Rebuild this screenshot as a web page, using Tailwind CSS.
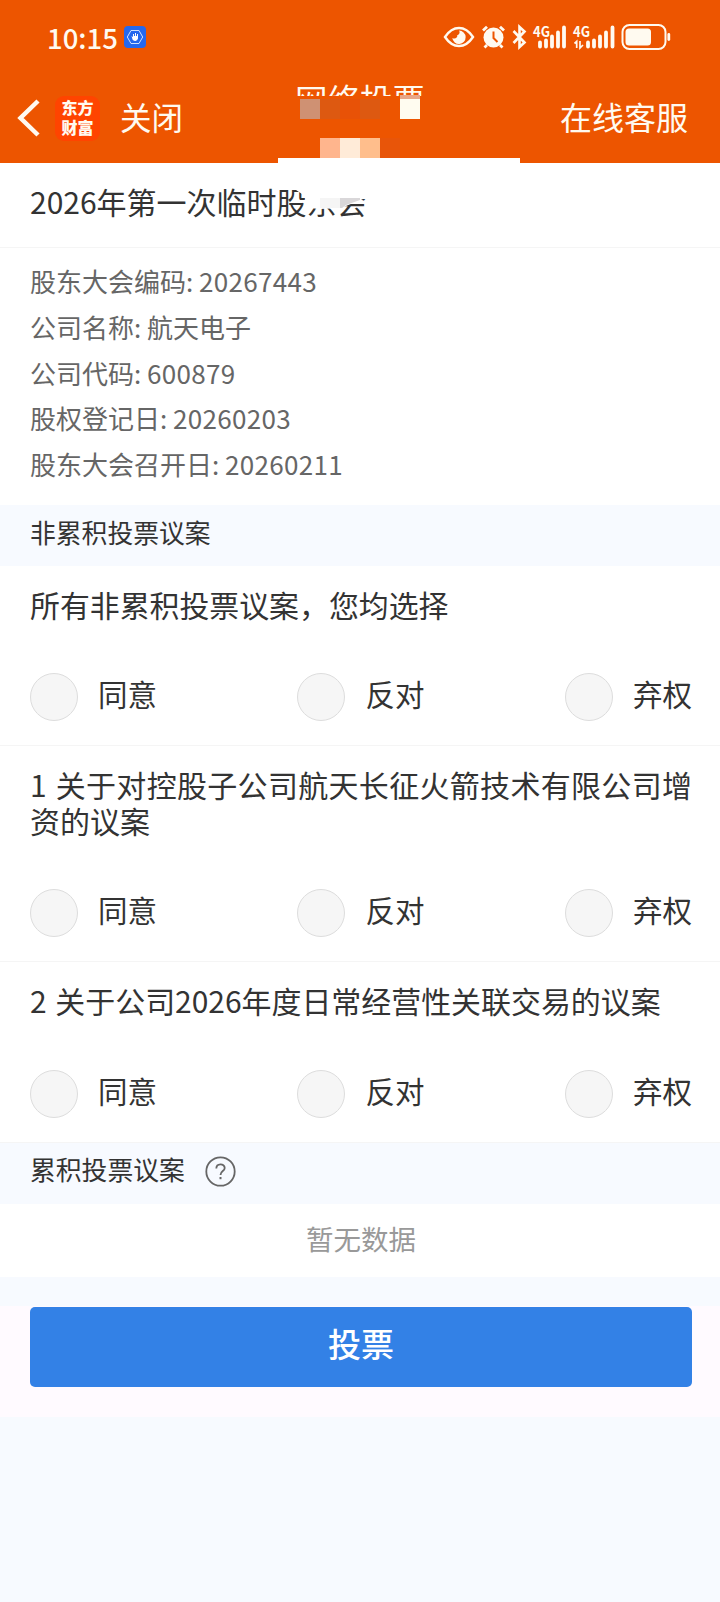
<!DOCTYPE html>
<html lang="zh-CN">
<head>
  <meta charset="UTF-8">
  <meta name="viewport" content="width=device-width, initial-scale=1.0">
  <title>网络投票</title>
  <script src="https://cdn.jsdelivr.net/npm/@tailwindcss/browser@4"></script>
</head>
<body class="bg-[#f7faff] font-['Noto_Sans_CJK_SC',sans-serif] text-[#333]">
<div class="w-[720px] h-[1602px] overflow-hidden">

  <!-- Header -->
  <header class="relative h-[163px] bg-[#ed5500] text-[#fffaf0]">
    <!-- Status bar -->
    <div class="h-[74px] pl-[47px] pr-[48px] flex items-center justify-between">
      <div class="flex items-center">
        <span class="w-[77px] pb-px text-[27.500px] leading-[36px] font-medium">10:15</span>
        <svg class="w-[22px] h-[22px]" viewBox="0 0 22 22">
          <rect width="22" height="22" rx="4" fill="#2468ee"/>
          <path d="M7 4.500h8l3.700 6.500-3.700 6.500H7L3.300 11z" fill="none" stroke="#cfe2ff" stroke-width="1"/>
          <path d="M7.500 10l1.500 1V8h1v2h1V7h1v3h1V8h1v4.500a3 3 0 0 1-5.500 1z" fill="#fff"/>
        </svg>
      </div>
      <svg class="w-[230px] h-[30px]" viewBox="442 22 230 30" fill="none" stroke="#fffaf0">
        <!-- eye -->
        <path d="M445 37c4-6 8-9 14-9s10 3 14 9c-4 6-8 9-14 9s-10-3-14-9z" stroke-width="2.400"/>
        <path d="M459 30.500a6.700 6.700 0 1 1-6.700 7.500c2.500 1.500 5.500 0 5-3 2 0 3-2.500 1.700-4.500z" fill="#fffaf0" stroke="none"/>
        <!-- alarm -->
        <circle cx="493.500" cy="37.500" r="10" fill="#fffaf0" stroke="none"/>
        <path d="M483 30.500l4-3.800M504 30.500l-4-3.800M487 45l-2.500 2.500M500 45l2.500 2.500" stroke-width="2.800"/>
        <path d="M493.500 31.500v6.500l4 4" stroke="#ed5500" stroke-width="2"/>
        <!-- bluetooth -->
        <path d="M513.500 31l11 11.500-5 4.500V27l5 4.500-11 11.500" stroke-width="2.600"/>
        <!-- signal 1 -->
        <path d="M540 46.500v-4M546 46.500v-6M552 46.500v-10M558 46.500v-14M564 46.500v-19" stroke-width="3.800" stroke-linecap="round"/>
        <!-- signal 2 -->
        <path d="M588 46.500v-4M594 46.500v-6M600 46.500v-10M606 46.500v-14M612.500 46.500v-19" stroke-width="3.800" stroke-linecap="round"/>
        <path d="M574.500 43.500l2.200-2v6.500M580 41v7l3-3" stroke-width="1.700"/>
        <g fill="#fffaf0" stroke="none" font-size="14" font-weight="700" font-family="Noto Sans CJK SC">
          <text x="533" y="37" textLength="17" lengthAdjust="spacingAndGlyphs">4G</text>
          <text x="573" y="37" textLength="17" lengthAdjust="spacingAndGlyphs">4G</text>
        </g>
        <!-- battery -->
        <rect x="622.500" y="25" width="43" height="24" rx="7" stroke-width="2"/>
        <rect x="625.500" y="28.500" width="25.500" height="17" rx="3.500" fill="#fffaf0" stroke="none"/>
        <path d="M668.800 34.500v5" stroke-width="2.800" stroke-linecap="round"/>
      </svg>
    </div>

    <!-- Navigation bar -->
    <div class="h-[88px] pl-[17px] pr-[32px] flex items-center justify-between">
      <div class="flex items-center">
        <svg class="w-[23px] h-[38px]" viewBox="0 0 23 38" fill="none" stroke="#fffaf0" stroke-width="4.500">
          <path d="M21 2L3.500 19 21 36"/>
        </svg>
        <div class="ml-[15px] w-[45px] h-[45px] rounded-[9px] bg-[#ff4400] text-[16px] font-black text-center flex flex-col">
          <span class="mt-px h-[20px] leading-[20px]">东方</span>
          <span class="h-[20px] leading-[20px]">财富</span>
        </div>
        <span class="ml-[20px] pb-[4px] text-[31.500px] leading-[40px]">关闭</span>
      </div>
      <span class="pb-[4px] text-[32px] leading-[40px]">在线客服</span>
    </div>

    <!-- Page title, mostly covered by the mosaic -->
    <div class="absolute left-[295px] top-[82px] w-[132px] h-[14px] overflow-hidden text-[32.500px] leading-[34px] whitespace-nowrap">网络投票</div>
    <div class="absolute left-[300px] top-[99px] flex">
      <i class="size-5 bg-[#cf9173]"></i>
      <i class="size-5 bg-[#dd5911]"></i>
      <i class="size-5 bg-[#e85207]"></i>
      <i class="size-5 bg-[#dd5911]"></i>
      <i class="size-5"></i>
      <i class="w-5 h-[24px] -mt-[4px] border-t-4 border-[#e8a688] bg-[#fffcf0]"></i>
    </div>
    <div class="absolute left-[320px] top-[138px] flex">
      <i class="size-5 bg-[#ffb58d]"></i>
      <i class="size-5 bg-[#ffebd8]"></i>
      <i class="size-5 bg-[#ffbe8c]"></i>
      <i class="size-5 bg-[#e85509]"></i>
    </div>
    <div class="absolute left-[278px] top-[158px] w-[242px] h-[5px] bg-white"></div>
  </header>

  <!-- Meeting title -->
  <div class="relative h-[85px] px-[30px] pt-[20px] bg-white border-b border-[#f5f5f5]">
    <h1 class="text-[30px] leading-[36px]">2026年第一次临时股东会</h1>
    <svg class="absolute left-[290px] top-[17px] w-[80px] h-[35px]" viewBox="290 180 80 35">
      <path d="M296 180h74v19h-7l-17 7-4 2-22 1-11-1-3-4-1-8-9-6z" fill="#fff"/>
      <path d="M320 198h20v10h-20z" fill="#f5f5f5"/>
      <path d="M340 198h20v2l-14 5-4 3h-2z" fill="#d9d7d9"/>
    </svg>
  </div>

  <!-- Meeting info -->
  <div class="h-[257px] px-[30px] pt-[10px] bg-white text-[26px] leading-[45.800px] text-[#666]">
    <p>股东大会编码: <span class="tracking-[0.300px]">20267443</span></p>
    <p>公司名称: 航天电子</p>
    <p>公司代码: <span class="tracking-[0.300px]">600879</span></p>
    <p>股权登记日: <span class="tracking-[0.300px]">20260203</span></p>
    <p>股东大会召开日: <span class="tracking-[0.300px]">20260211</span></p>
  </div>

  <div class="h-[61px] px-[30px] text-[25.800px] leading-[54px]">非累积投票议案</div>

  <!-- Proposals -->
  <section class="h-[180px] pl-[30px] pr-[28px] pt-[20px] bg-white border-b border-[#f5f5f5] text-[30px] leading-[36px]">
    <h2 class="text-[29.900px]">所有非累积投票议案，您均选择</h2>
    <div class="mt-[51px] flex justify-between text-[29.500px]">
      <label class="flex gap-[20px]"><i class="size-[48px] rounded-full border border-[#ddd] bg-[#f6f6f6]"></i><span class="leading-[40px]">同意</span></label>
      <label class="flex gap-[20px]"><i class="size-[48px] rounded-full border border-[#ddd] bg-[#f6f6f6]"></i><span class="leading-[40px]">反对</span></label>
      <label class="flex gap-[20px]"><i class="size-[48px] rounded-full border border-[#ddd] bg-[#f6f6f6]"></i><span class="leading-[40px]">弃权</span></label>
    </div>
  </section>

  <section class="h-[216px] pl-[30px] pr-[28px] pt-[20px] bg-white border-b border-[#f5f5f5] text-[30px] leading-[36px]">
    <h2 class="text-justify"><span class="mr-[2px]">1</span> 关于对控股子公司航天长征火箭技术有限公司增资的议案</h2>
    <div class="mt-[51px] flex justify-between text-[29.500px]">
      <label class="flex gap-[20px]"><i class="size-[48px] rounded-full border border-[#ddd] bg-[#f6f6f6]"></i><span class="leading-[41px]">同意</span></label>
      <label class="flex gap-[20px]"><i class="size-[48px] rounded-full border border-[#ddd] bg-[#f6f6f6]"></i><span class="leading-[41px]">反对</span></label>
      <label class="flex gap-[20px]"><i class="size-[48px] rounded-full border border-[#ddd] bg-[#f6f6f6]"></i><span class="leading-[41px]">弃权</span></label>
    </div>
  </section>

  <section class="h-[181px] pl-[30px] pr-[28px] pt-[20px] bg-white border-b border-[#f5f5f5] text-[30px] leading-[36px]">
    <h2 class="text-[29.950px]"><span class="mr-[2px]">2</span> 关于公司2026年度日常经营性关联交易的议案</h2>
    <div class="mt-[52px] flex justify-between text-[29.500px]">
      <label class="flex gap-[20px]"><i class="size-[48px] rounded-full border border-[#ddd] bg-[#f6f6f6]"></i><span class="leading-[40px]">同意</span></label>
      <label class="flex gap-[20px]"><i class="size-[48px] rounded-full border border-[#ddd] bg-[#f6f6f6]"></i><span class="leading-[40px]">反对</span></label>
      <label class="flex gap-[20px]"><i class="size-[48px] rounded-full border border-[#ddd] bg-[#f6f6f6]"></i><span class="leading-[40px]">弃权</span></label>
    </div>
  </section>

  <div class="h-[61px] px-[30px] flex text-[25.800px] leading-[52px]">
    <span>累积投票议案</span>
    <svg class="ml-[20px] mt-[13px] w-[31px] h-[31px]" viewBox="0 0 31 31" fill="none" stroke="#666" stroke-width="1.800">
      <circle cx="15.500" cy="15.500" r="14.200"/>
      <path d="M11.300 12.500c0-5.500 8.400-5.500 8.400-.5 0 3.200-4.200 3-4.200 7"/>
      <path d="M15.500 21v2.200" stroke-width="2"/>
    </svg>
  </div>

  <div class="h-[73px] bg-white text-center text-[27.500px] leading-[69px] text-[#999] pl-[2px]">暂无数据</div>

  <!-- Submit -->
  <div class="mt-[29px] h-[111px] pt-px pl-[30px] pr-[28px] bg-[#fffaff]">
    <button type="button" class="block w-full h-[80px] pb-[7px] rounded-[5px] bg-[#3381e6] text-white text-[33px] font-medium">投票</button>
  </div>

</div>
</body>
</html>
